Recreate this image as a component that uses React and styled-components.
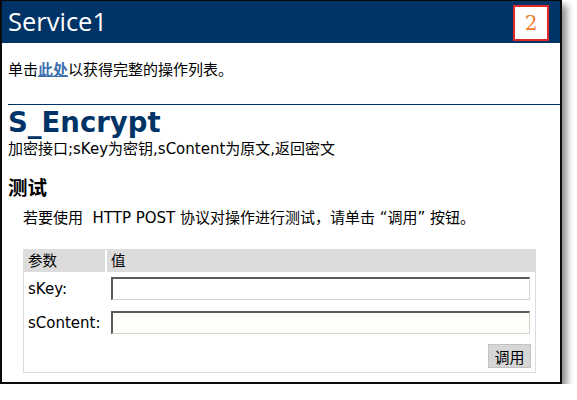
import React from "react";
import styled, { createGlobalStyle } from "styled-components";

const GlobalStyle = createGlobalStyle`
  body {
    margin: 0;
    background: #fff;
    font-family: "DejaVu Sans", "Noto Sans CJK SC", sans-serif;
    color: #000;
  }
`;

const Frame = styled.div`
  position: relative;
  box-sizing: border-box;
  width: 562px;
  height: 384px;
  border: 2px solid #0a0a0a;
  border-top-width: 1px;
  background: #fff;
  box-shadow: 5px 5px 7px rgba(0, 0, 0, 0.45);
  overflow: hidden;
`;

const Header = styled.div`
  display: flex;
  align-items: center;
  height: 42px;
  padding-left: 6px;
  background: #003366;
  color: #fff;
  font-family: "Open Sans", sans-serif;
  font-size: 25.5px;
  line-height: 1;
`;

const Badge = styled.div`
  position: absolute;
  left: 511px;
  top: 4px;
  box-sizing: border-box;
  width: 36px;
  height: 36px;
  display: flex;
  align-items: center;
  justify-content: center;
  border: 2px solid #e0282a;
  background: #fff;
  color: #ec7c30;
  font-family: "DejaVu Serif", serif;
  font-size: 20px;
`;

const Content = styled.div`
  padding-left: 6px;
  font-size: 15px;
`;

const Intro = styled.p`
  margin: 17px 0 0;
  line-height: 20px;
`;

const Link = styled.a`
  color: #3d6fae;
  font-weight: bold;
  text-decoration: underline;
`;

const OpTitle = styled.h2`
  margin: 24px 0 0;
  padding-top: 2px;
  border-top: 1px solid #003366;
  color: #003366;
  font-size: 27.5px;
  font-weight: bold;
  line-height: 31px;
`;

const Text = styled.p`
  margin: ${(p) => p.$top || 0}px 0 0 ${(p) => p.$indent || 0}px;
  line-height: 20px;
  white-space: pre;
`;

const SubTitle = styled.h3`
  margin: 16px 0 0;
  font-family: "Noto Sans CJK SC", sans-serif;
  font-size: 19.5px;
  font-weight: bold;
  line-height: 24px;
`;

const Form = styled.div`
  box-sizing: border-box;
  width: 513px;
  height: 124px;
  margin: 21px 0 0 15px;
  border: 1px solid #dcdcdc;
`;

const HeadRow = styled.div`
  display: grid;
  grid-template-columns: 81px 1fr;
  column-gap: 2px;
  height: 22px;
`;

const HeadCell = styled.div`
  padding-left: 4px;
  background: #dcdcdc;
  line-height: 22px;
  font-size: 14.5px;
`;

const Fields = styled.div`
  display: flex;
  flex-direction: column;
  gap: 11px;
  padding: 5px 5px 0 4px;
`;

const Field = styled.label`
  display: grid;
  grid-template-columns: 83px 1fr;
  align-items: center;
`;

const Input = styled.input`
  box-sizing: border-box;
  width: 100%;
  height: 23px;
  margin: 0;
  border-style: solid;
  border-width: 2px 1px 1px 2px;
  border-color: #5a5a5a #d6d2ca #d6d2ca #5a5a5a;
  background: ${(p) => p.$tint || "#fff"};
  outline: none;
`;

const Actions = styled.div`
  display: flex;
  justify-content: flex-end;
  padding: 10px 4px 0;
`;

const Button = styled.button`
  box-sizing: border-box;
  width: 43px;
  height: 24px;
  padding: 0;
  border: 1px solid #c2c2c2;
  background: #d6d6d6;
  font-family: "Noto Sans CJK SC", sans-serif;
  font-size: 15px;
  color: #000;
`;

const App = () => {
  return (
    <>
      <GlobalStyle />
      <Frame>
        <Header>Service1</Header>
        <Badge>2</Badge>
        <Content>
          <Intro>
            单击<Link href="#">此处</Link>以获得完整的操作列表。
          </Intro>
          <OpTitle>S_Encrypt</OpTitle>
          <Text $top={1}>加密接口;sKey为密钥,sContent为原文,返回密文</Text>
          <SubTitle>测试</SubTitle>
          <Text $top={9} $indent={15}>
            若要使用  HTTP POST 协议对操作进行测试，请单击 “调用” 按钮。
          </Text>
          <Form>
            <HeadRow>
              <HeadCell>参数</HeadCell>
              <HeadCell>值</HeadCell>
            </HeadRow>
            <Fields>
              <Field>
                sKey:
                <Input type="text" />
              </Field>
              <Field>
                sContent:
                <Input type="text" $tint="#fffffa" />
              </Field>
            </Fields>
            <Actions>
              <Button type="button">调用</Button>
            </Actions>
          </Form>
        </Content>
      </Frame>
    </>
  );
};

export default App;
